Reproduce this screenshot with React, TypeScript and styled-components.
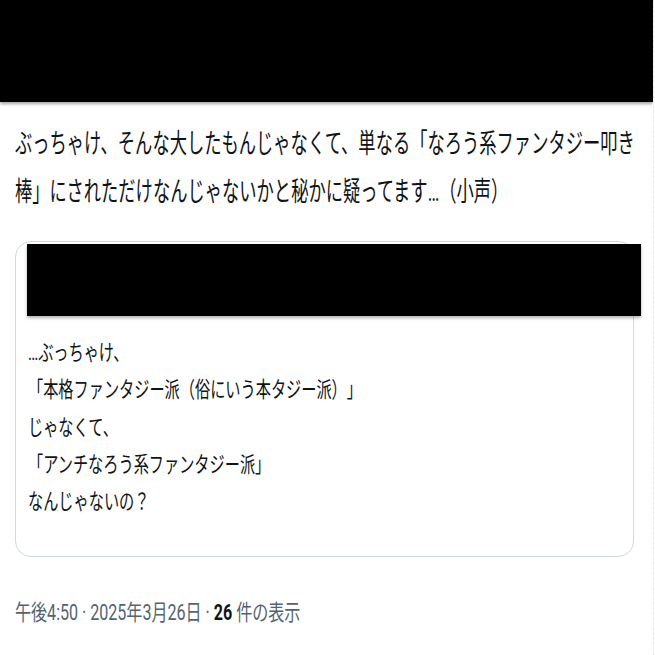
import React from "react";
import styled, { createGlobalStyle } from "styled-components";

const Global = createGlobalStyle`
  html, body { margin: 0; padding: 0; background: #ffffff; }
  body {
    font-family: Roboto, "Noto Sans CJK JP", sans-serif;
    color: #0f1419;
    text-spacing-trim: space-all;
  }
`;

const Page = styled.div`
  width: 654px;
  min-height: 655px;
  border-right: 1px dashed #e4e8ea;
  box-sizing: border-box;
  overflow: hidden;
`;

const TopMask = styled.div`
  height: 102px;
  background: #000;
  box-shadow: 0 2px 3px rgba(0, 0, 0, 0.35);
`;

const Squeeze = styled.div<{ $s: number }>`
  transform: scaleX(${(p) => p.$s});
  transform-origin: left top;
  width: ${(p) => 100 / p.$s}%;
`;

const Line = styled.div<{ $size: number; $lh: number }>`
  font-size: ${(p) => p.$size}px;
  line-height: ${(p) => p.$lh}px;
  white-space: nowrap;
  text-spacing-trim: space-all;
`;

const Body = styled.div`
  padding: 18px 0 0 15px;
`;

const Card = styled.div`
  margin: 25px 19px 0 15px;
  border: 1px solid #cfd9de;
  border-radius: 16px;
  padding: 2px 0 36px 0;
`;

const CardMask = styled.div`
  margin-left: 11px;
  width: 614px;
  height: 72px;
  background: #000;
  box-shadow: 0 2px 3px rgba(0, 0, 0, 0.3);
`;

const CardText = styled.div`
  padding: 18px 0 0 12px;
`;

const Meta = styled.div`
  padding: 41px 0 0 15px;
  color: #536471;
`;

const Strong = styled.span`
  font-weight: 700;
  color: #0f1419;
`;

const mainLines = [
  "ぶっちゃけ、そんな大したもんじゃなくて、単なる「なろう系ファンタジー叩き",
  "棒」にされただけなんじゃないかと秘かに疑ってます…（小声）",
];

const cardLines = [
  "…ぶっちゃけ、",
  "「本格ファンタジー派（俗にいう本タジー派）」",
  "じゃなくて、",
  "「アンチなろう系ファンタジー派」",
  "なんじゃないの？",
];

export default function App() {
  return (
    <>
      <Global />
      <Page>
        <TopMask />
        <Body>
          <Squeeze $s={0.64}>
            {mainLines.map((l) => (
              <Line key={l} $size={27} $lh={48}>
                {l}
              </Line>
            ))}
          </Squeeze>
        </Body>
        <Card>
          <CardMask />
          <CardText>
            <Squeeze $s={0.69}>
              {cardLines.map((l) => (
                <Line key={l} $size={22} $lh={37.3}>
                  {l}
                </Line>
              ))}
            </Squeeze>
          </CardText>
        </Card>
        <Meta>
          <Squeeze $s={0.73}>
            <Line $size={22} $lh={30}>
              午後4:50 · 2025年3月26日 · <Strong>26</Strong> 件の表示
            </Line>
          </Squeeze>
        </Meta>
      </Page>
    </>
  );
}
